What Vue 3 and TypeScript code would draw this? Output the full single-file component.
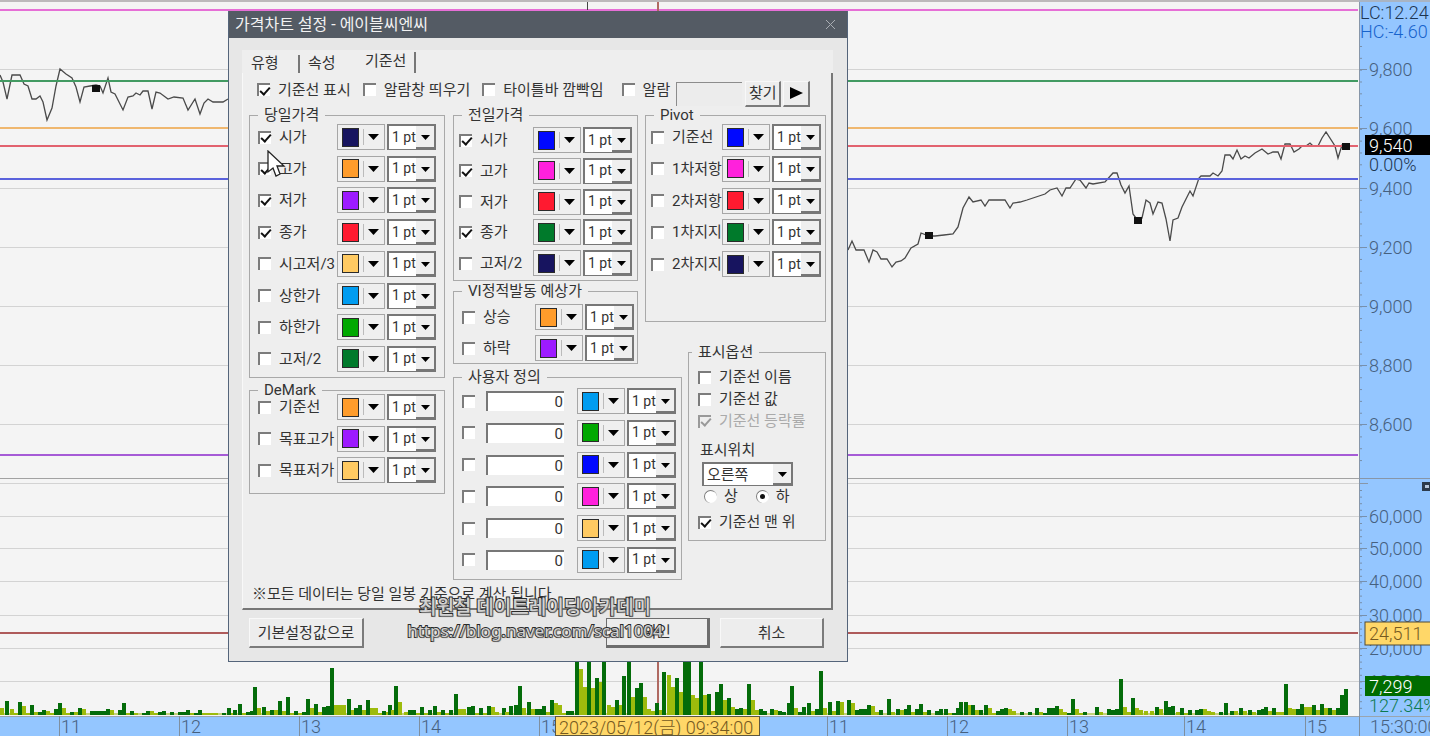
<script setup lang="ts">
import { reactive, ref } from 'vue'

interface Row { label: string; color: string; on?: boolean; value?: string; width: string }
interface Group { key: string; title: string; rows: Row[] }
interface Area { name: string; groups: Group[] }

const navy = '#17145f'
const orange = '#ff9c2b'
const purple = '#9d1bff'
const red = '#ff1a30'
const sand = '#ffca62'
const sky = '#009cf0'
const lime = '#00a800'
const green = '#007a2b'
const blue = '#0008ff'
const pink = '#ff21dc'

const row = (label: string, color: string, on = false, value?: string): Row =>
  ({ label, color, on, value, width: '1 pt' })

const areas = reactive<Area[]>([
  {
    name: 'left',
    groups: [
      {
        key: 'today', title: '당일가격', rows: [
          row('시가', navy, true), row('고가', orange, true), row('저가', purple, true), row('종가', red, true),
          row('시고저/3', sand), row('상한가', sky), row('하한가', lime), row('고저/2', green),
        ],
      },
      { key: 'demark', title: 'DeMark', rows: [row('기준선', orange), row('목표고가', purple), row('목표저가', sand)] },
    ],
  },
  {
    name: 'middle',
    groups: [
      {
        key: 'prev', title: '전일가격', rows: [
          row('시가', blue, true), row('고가', pink, true), row('저가', red), row('종가', green, true), row('고저/2', navy),
        ],
      },
      { key: 'vi', title: 'VI정적발동 예상가', rows: [row('상승', orange), row('하락', purple)] },
    ],
  },
  {
    name: 'right',
    groups: [
      {
        key: 'pivot', title: 'Pivot', rows: [
          row('기준선', blue), row('1차저항', pink), row('2차저항', red), row('1차지지', green), row('2차지지', navy),
        ],
      },
    ],
  },
  {
    name: 'custom',
    groups: [
      {
        key: 'user', title: '사용자 정의', rows: [sky, lime, blue, pink, sand, sky].map(c => row('', c, false, '0')),
      },
    ],
  },
])

const tools = reactive([
  { label: '기준선 표시', on: true },
  { label: '알람창 띄우기', on: false },
  { label: '타이틀바 깜빡임', on: false },
  { label: '알람', on: false },
])
const display = reactive([
  { label: '기준선 이름', on: false, disabled: false },
  { label: '기준선 값', on: false, disabled: false },
  { label: '기준선 등락률', on: true, disabled: true },
])
const onTop = ref(true)
const side = ref('오른쪽')
const vertical = ref('하')
const widths = ['1 pt', '2 pt', '3 pt', '4 pt', '5 pt']

const grid = [69, 188, 247, 306, 365, 424, 483, 516, 548, 581, 615, 648, 681]
const levels = [
  { y: 9, c: '#e66fd6' }, { y: 80, c: '#429a62' }, { y: 127, c: '#efb76f' },
  { y: 145, c: '#e2626f' }, { y: 178, c: '#5a62dc' }, { y: 454, c: '#a65bd6' }, { y: 632, c: '#ae5a5a' },
]
const priceLeft = '0,75 3,82 7,99 12,75 20,75 24,84 28,86 32,99 36,99 40,96 43,102 47,120 52,108 56,86 60,69 66,74 72,78 76,87 80,102 84,87 90,86 96,85 100,86 103,93 108,78 111,92 115,94 123,110 128,97 133,96 136,93 140,95 143,91 148,91 152,109 156,92 160,93 168,99 174,97 183,98 188,110 195,99 200,114 204,103 208,99 213,102 223,102 228,99'
const priceRight = '848,250 852,241 856,250 864,250 869,262 873,250 877,252 881,259 887,259 892,267 896,262 901,261 905,258 911,248 918,244 921,233 929,236 935,236 944,235 953,234 958,227 963,208 969,197 973,202 981,200 985,206 989,200 1005,200 1010,208 1013,203 1020,202 1027,200 1045,194 1050,190 1057,188 1062,196 1066,188 1070,188 1076,179 1080,180 1086,188 1089,183 1093,184 1105,182 1113,173 1117,173 1121,185 1125,193 1129,186 1133,214 1138,221 1142,218 1146,200 1150,203 1153,214 1158,202 1162,203 1166,219 1170,241 1173,220 1178,218 1182,207 1190,191 1193,196 1199,178 1201,176 1210,176 1213,173 1218,176 1222,171 1225,155 1230,155 1233,159 1237,150 1241,159 1245,156 1249,158 1255,153 1262,149 1268,154 1273,152 1278,152 1281,159 1285,144 1290,144 1294,152 1299,149 1302,146 1306,146 1310,143 1313,146 1318,146 1322,138 1326,132 1335,146 1338,158 1342,145 1346,146'
const markers = [[96, 88], [929, 235], [1138, 220], [1346, 146]]

const volume = (
  'l0,7 d5,14 l10,6 l14,2 d18,13 l22,9 l26,2 d30,10 l34,3 d38,3 d42,5 l46,4 l50,2 d54,6 d58,12 l62,7 l66,2 d70,3 l74,3 d78,7 l82,6 d90,4 d94,4 d98,4 d102,4 d106,6 l110,5 d118,5 d122,12 l126,2 d130,4 l134,2 d142,2 d146,4 l150,4 l154,2 d158,3 d162,4 d170,3 d178,3 d182,3 d186,5 l190,2 d194,2 d198,5 l202,2 l206,2 l210,2 l214,2 d222,2 d227,7 l231,2 ' +
  'd233,5 d238,11 l242,2 d246,3 d250,4 d253,28 l257,7 d262,8 l266,4 d270,5 l274,5 d278,14 l282,4 d286,18 l290,2 d294,4 l298,2 d302,3 d306,16 l310,7 d314,11 l318,3 d322,8 d326,9 d330,47 l334,10 l338,10 l342,10 d347,16 l351,5 d354,7 d358,10 l362,5 d366,15 l370,7 l374,7 l378,2 d382,4 l386,3 d388,10 l391,5 d394,29 l398,13 l404,3 d408,5 d412,5 l416,2 d420,8 l424,2 d428,5 d433,9 l437,3 d441,5 l445,2 d449,5 d454,21 l458,6 l462,6 d467,8 d471,9 l475,2 d479,7 l483,2 d487,9 l491,8 l495,3 d502,7 l505,3 d509,9 d514,10 d518,29 l522,7 d527,13 l531,6 d535,6 d539,6 ' +
  'd542,9 l546,3 d550,15 l554,12 l558,10 l562,2 d566,4 d570,4 d575,54 l579,46 l583,28 d587,54 l591,27 d595,37 l599,33 d602,54 l607,10 l611,8 d615,15 l619,10 d622,39 d627,54 l631,18 d635,27 d639,32 l643,18 l647,6 l651,4 d655,12 l659,5 d662,43 l667,40 l671,28 d675,37 l679,23 d683,54 d687,54 l691,20 l695,17 d699,54 l703,20 d707,21 l711,4 d715,23 d719,31 l723,15 d727,17 l731,8 d735,6 d739,7 l743,6 d747,31 l751,15 l755,5 d759,6 d763,4 d770,6 l774,5 d778,4 d782,3 d787,12 d790,29 l794,7 d798,3 d802,8 d807,12 l811,4 d815,6 d819,44 l823,7 d828,13 l832,4 d836,14 l840,13 ' +
  'd847,15 l851,12 d855,5 d859,6 d863,6 d867,10 l871,9 l875,3 d879,5 d887,16 l891,3 d896,6 l900,5 d904,6 d907,10 l911,3 d915,6 d919,11 l923,3 d927,5 d935,4 d939,6 d944,6 l948,2 d952,2 d956,7 d959,13 d964,13 l968,10 d971,10 l975,5 d979,5 d984,10 l988,7 l992,2 d996,4 d1000,6 d1004,7 l1008,6 l1012,4 d1020,3 d1028,3 d1035,7 l1039,3 d1043,2 d1047,7 d1051,7 d1055,9 l1059,6 l1063,3 d1067,2 d1071,16 l1075,6 l1079,2 d1083,3 d1095,8 l1099,3 d1107,6 d1111,5 d1115,6 d1119,36 l1123,8 l1127,3 d1131,17 l1135,7 l1139,5 l1144,4 l1150,4 d1155,8 l1159,6 d1164,14 d1168,8 d1171,9 l1176,3 d1180,7 l1184,2 d1188,5 d1195,5 d1199,6 l1203,6 l1207,4 l1211,3 d1219,3 d1224,12 d1230,4 l1234,4 ' +
  'd1239,7 l1243,4 d1248,5 l1252,3 d1257,5 d1261,6 d1264,8 l1268,4 d1272,7 l1276,3 l1280,3 d1284,31 l1288,7 l1292,6 d1296,6 d1300,11 l1304,8 l1308,8 d1312,10 l1316,5 d1320,11 l1324,7 d1328,7 l1332,5 d1336,7 d1340,20 d1344,26'
).split(' ').map(s => {
  const [x, h] = s.slice(1).split(',').map(Number)
  return { x, h, c: s[0] === 'd' ? '#046c0a' : '#9dbb0c' }
})

const prices = [
  { y: 69, t: '9,800' }, { y: 128, t: '9,600' }, { y: 188, t: '9,400' }, { y: 247, t: '9,200' },
  { y: 306, t: '9,000' }, { y: 365, t: '8,800' }, { y: 424, t: '8,600' },
]
const volumes = [
  { y: 516, t: '60,000' }, { y: 548, t: '50,000' }, { y: 581, t: '40,000' },
  { y: 615, t: '30,000' }, { y: 648, t: '20,000' }, { y: 681, t: '10,000' },
]
const minor = [
  ...Array.from({ length: 36 }, (_, i) => 46 + i * 11.83).filter(y => y < 472),
  ...Array.from({ length: 36 }, (_, i) => 490 + i * 6.6).filter(y => y < 714),
]
const hours = [
  { x: 59, t: '11' }, { x: 179, t: '12' }, { x: 299, t: '13' }, { x: 419, t: '14' }, { x: 539, t: '15' },
  { x: 827, t: '11' }, { x: 947, t: '12' }, { x: 1067, t: '13' }, { x: 1184, t: '14' }, { x: 1305, t: '15' },
]
</script>

<template>
  <main class="screen">
    <div class="chart">
      <svg class="plot" viewBox="0 0 1359 716" preserveAspectRatio="none" role="img" aria-label="가격차트">
        <rect x="0" y="0" width="1359" height="2" fill="#bcb9bb" />
        <rect v-for="y in grid" :key="y" x="0" :y="y" width="1359" height="1" fill="#d3d3d3" />
        <rect x="0" y="478" width="1359" height="1" fill="#a2a2a2" />
        <polyline :points="priceLeft" class="price" />
        <polyline :points="priceRight" class="price" />
        <rect v-for="l in levels" :key="l.y" x="0" :y="l.y" width="1358" height="2" :fill="l.c" />
        <rect v-for="m in markers" :key="m[0]" :x="m[0] - 4" :y="m[1] - 3" width="8" height="7" fill="#111" />
        <rect x="587" y="2" width="1" height="8" fill="#444" />
        <rect x="657" y="2" width="2" height="713" fill="#b06a62" />
        <rect x="0" y="713" width="1348" height="2" fill="#c4d27a" />
        <rect v-for="v in volume" :key="v.x" :x="v.x" :y="715 - v.h" width="4" :height="v.h" :fill="v.c" />
      </svg>
      <svg class="scale" viewBox="0 0 71 716" preserveAspectRatio="none" role="img" aria-label="가격 축">
        <rect width="71" height="716" fill="#94c6ff" />
        <rect width="1" height="716" fill="#8796a8" />
        <rect width="71" height="2" fill="#a8b4c4" />
        <rect v-for="y in minor" :key="y" x="1" :y="y" width="2" height="1" fill="#7890ac" />
        <rect y="478" width="71" height="1" fill="#8796a8" />
        <rect y="483" width="9" height="1" fill="#8796a8" />
        <g v-for="p in [...prices, ...volumes]" :key="p.t">
          <rect x="1" :y="p.y" width="7" height="1" fill="#7890ac" />
          <text x="10" :y="p.y + 7" class="num">{{ p.t }}</text>
        </g>
        <text x="1" y="19" class="num dark">LC:12.24</text>
        <text x="1" y="38" class="num blue">HC:-4.60</text>
        <rect x="6" y="135" width="65" height="20" fill="#000" />
        <text x="10" y="152" class="num white">9,540</text>
        <text x="10" y="171" class="num dark">0.00%</text>
        <rect x="63" y="482" width="9" height="9" fill="#2d3b4c" />
        <rect x="66" y="485" width="4" height="3" fill="#b8c8dc" />
        <rect x="6" y="622" width="68" height="23" fill="#ffd768" stroke="#4f4a38" />
        <text x="10" y="640" class="num brown">24,511</text>
        <rect x="6" y="676" width="65" height="20" fill="#006c00" />
        <text x="10" y="693" class="num white">7,299</text>
        <text x="10" y="712" class="num green">127.34%</text>
      </svg>
    </div>
    <svg class="timeline" viewBox="0 0 1430 20" preserveAspectRatio="none" role="img" aria-label="시간 축">
      <rect width="1430" height="20" fill="#94c6ff" />
      <rect width="1430" height="1" fill="#9aa4ae" />
      <g v-for="h in hours" :key="h.x">
        <rect :x="h.x" y="0" width="1" height="20" fill="#7f8f9f" />
        <text :x="h.x + 2" y="17" class="num">{{ h.t }}</text>
      </g>
      <rect x="1359" width="1" height="20" fill="#7f8f9f" />
      <text x="1370" y="17" class="num">15:30:00</text>
      <rect x="555.5" y="0.5" width="204" height="19" fill="#ffd768" stroke="#5c563f" />
      <text x="559" y="18" class="num brown">2023/05/12(금) 09:34:00</text>
    </svg>

    <section class="dialog" role="dialog" aria-label="가격차트 설정">
      <header class="titlebar">
        <h1>가격차트 설정 - 에이블씨엔씨</h1>
        <button class="close" type="button" aria-label="닫기">
          <svg width="11" height="11" viewBox="0 0 11 11"><path d="M1 1L10 10M10 1L1 10" stroke="#a9adb3" fill="none" /></svg>
        </button>
      </header>

      <div class="body">
        <nav class="tabs">
          <button type="button" class="tab first">유형</button>
          <button type="button" class="tab second">속성</button>
          <button type="button" class="tab active">기준선</button>
        </nav>

        <div class="panel">
          <div class="tools">
            <label v-for="t in tools" :key="t.label" class="check">
              <input v-model="t.on" type="checkbox"><span>{{ t.label }}</span>
            </label>
            <input class="alarm" type="text" aria-label="알람 파일" disabled>
            <button type="button" class="btn small">찾기</button>
            <button type="button" class="btn play" aria-label="재생">
              <svg width="13" height="14" viewBox="0 0 13 14"><path d="M0 1L13 7L0 13Z" fill="#000" /></svg>
            </button>
          </div>

          <div class="groups">
            <div v-for="area in areas" :key="area.name" class="area" :class="area.name">
              <fieldset v-for="g in area.groups" :key="g.key" class="group" :class="g.key">
                <legend>{{ g.title }}</legend>
                <div class="rows">
                  <div v-for="(r, i) in g.rows" :key="i" class="row">
                    <label class="check">
                      <input v-model="r.on" type="checkbox" :aria-label="r.label || `사용자 정의 ${i + 1}`">
                      <span v-if="r.label">{{ r.label }}</span>
                    </label>
                    <input v-if="r.value !== undefined" v-model="r.value" class="value" type="text" aria-label="값">
                    <button type="button" class="picker" aria-label="색상">
                      <span class="swatch" :style="{ background: r.color }"></span>
                      <svg width="11" height="6" viewBox="0 0 11 6"><path d="M0 0H11L5.500 6Z" fill="#000" /></svg>
                    </button>
                    <span class="select">
                      <select v-model="r.width" aria-label="굵기">
                        <option v-for="w in widths" :key="w">{{ w }}</option>
                      </select>
                      <i><svg width="9" height="5" viewBox="0 0 9 5"><path d="M0 0H9L4.500 5Z" fill="#000" /></svg></i>
                    </span>
                  </div>
                </div>
              </fieldset>
            </div>

            <fieldset class="group options">
              <legend>표시옵션</legend>
              <label v-for="d in display" :key="d.label" class="check" :class="{ off: d.disabled }">
                <input v-model="d.on" type="checkbox" :disabled="d.disabled"><span>{{ d.label }}</span>
              </label>
              <label class="caption" for="side">표시위치</label>
              <span class="select wide">
                <select id="side" v-model="side">
                  <option>왼쪽</option>
                  <option>오른쪽</option>
                </select>
                <i><svg width="9" height="5" viewBox="0 0 9 5"><path d="M0 0H9L4.500 5Z" fill="#000" /></svg></i>
              </span>
              <div class="radios">
                <label v-for="v in ['상', '하']" :key="v" class="check">
                  <input v-model="vertical" type="radio" name="vertical" :value="v"><span>{{ v }}</span>
                </label>
              </div>
              <label class="check"><input v-model="onTop" type="checkbox"><span>기준선 맨 위</span></label>
            </fieldset>
          </div>

          <p class="note">※모든 데이터는 당일 일봉 기준으로 계산 됩니다</p>
        </div>

        <footer class="actions">
          <button type="button" class="btn reset">기본설정값으로</button>
          <button type="button" class="btn ok">확인</button>
          <button type="button" class="btn cancel">취소</button>
        </footer>
      </div>

      <p class="watermark">
        <span>최원철 데이트레이딩아카데미</span>
        <span class="url">https://blog.naver.com/scal1004</span>
      </p>
      <svg class="cursor" width="20" height="28" viewBox="0 0 20 28">
        <path d="M1 1V22L6 18L9 26L13 24L10 16H17Z" fill="#fff" stroke="#222" stroke-width="1.300" />
      </svg>
    </section>
  </main>
</template>

<style>
html, body, #app { height: 100%; }
body { margin: 0; overflow: hidden; }
</style>

<style scoped>
.screen {
  position: relative;
  display: flex;
  flex-direction: column;
  min-height: 100vh;
  background: #f4f4f4;
  font-family: Roboto, "Noto Sans CJK KR", sans-serif;
  font-size: 15px;
  color: #333;
}
.screen * { box-sizing: border-box; }
button, input, select { font: inherit; color: inherit; margin: 0; }
.chart { flex: 1; display: flex; min-height: 0; }
.plot { flex: 1; min-width: 0; height: calc(100vh - 20px); display: block; }
.scale { width: 71px; height: calc(100vh - 20px); display: block; }
.timeline { width: 100%; height: 20px; display: block; }
.price { fill: none; stroke: #4a4a4a; stroke-width: 1.3; }
.num { font-size: 18px; font-weight: 300; fill: #46607e; }
.num.dark { fill: #1d3550; }
.num.blue { fill: #1763cc; }
.num.white { fill: #fff; }
.num.brown { fill: #75591f; }
.num.green { fill: #0c7a50; }

.dialog {
  position: absolute;
  left: 228px;
  top: 11px;
  width: 620px;
  border: 1px solid #54647a;
  border-top: 0;
  background: #e7e7e7;
}
.titlebar {
  display: flex;
  align-items: center;
  justify-content: space-between;
  height: 27px;
  padding: 0 11px 0 6px;
  background: #545b64;
}
.titlebar h1 { margin: 0; font-size: 16px; line-height: 22px; font-weight: 400; color: #f2f2f2; }
.close { border: 0; padding: 2px 0; background: none; display: flex; }
.body { padding: 12px 14px 13px 13px; }
.tabs { display: flex; align-items: flex-end; height: 23px; background: #eee; }
.tab { height: 18px; border: 0; background: none; padding: 0 0 2px 9px; width: 58px; text-align: left; line-height: 16px; }
.tab.first { border-right: 2px solid #777; }
.tab.second { padding-left: 8px; width: 56px; }
.tab.active { height: 21px; padding-bottom: 4px; width: 60px; border-right: 2px solid #777; }
.panel {
  padding: 0 5px 0 6px;
  min-height: 537px;
  background: #eee;
  border: solid #777;
  border-width: 0 2px 2px 0;
  border-left: 1px solid #f8f8f8;
}
.tools { display: flex; align-items: center; height: 33px; padding-left: 8px; }
.tools .check { gap: 8px; margin-right: 12px; }
.tools .check:nth-of-type(3) { margin-right: 18px; }
.tools .check:nth-of-type(4) { margin-right: 6px; }
.check { display: flex; align-items: center; gap: 8px; white-space: nowrap; line-height: 20px; }
.check input { appearance: none; flex: none; width: 13px; height: 13px; background: #fff; border: solid #7c7c7c; border-width: 2px 0 0 2px; }
.check input:checked { display: grid; place-items: center; }
.check input[type="checkbox"]:checked::after {
  content: "";
  width: 8px;
  height: 4px;
  border: solid #111;
  border-width: 0 0 2px 2px;
  transform: translateY(-1px) rotate(-48deg);
}
.check.off { color: #aaa; }
.check.off input { background: #eee; border-color: #999; }
.check.off input[type="checkbox"]:checked::after { border-color: #999; }
.check input[type="radio"] { border-radius: 50%; border-width: 1px 0 0 1px; }
.check input[type="radio"]:checked::after { content: ""; width: 5px; height: 5px; border-radius: 50%; background: #111; }
.alarm { width: 66px; height: 24px; margin: 8px 3px 0 0; background: #ececec; border: solid #8c8c8c; border-width: 1px 0 0 1px; }
.btn {
  background: #ededed;
  border: solid #7b7b7b;
  border-width: 1px 2px 2px 1px;
  border-top-color: #f8f8f8;
  border-left-color: #f8f8f8;
  padding: 0;
  line-height: 20px;
}
.btn.small { width: 36px; height: 26px; margin: 8px 2px 0 0; }
.btn.play { width: 27px; height: 26px; margin-top: 8px; display: grid; place-items: center; }

.groups {
  display: grid;
  grid-template-columns: 196px 8px 185px 7px 37px 6px 1fr;
  grid-template-rows: 237px 25px 212px;
}
.left { grid-area: 1 / 1 / 4 / 2; }
.middle { grid-area: 1 / 3 / 3 / 4; }
.right { grid-area: 1 / 5 / 2 / 8; }
.custom { grid-area: 3 / 3 / 4 / 6; }
.options { grid-area: 2 / 7 / 4 / 8; align-self: start; }
.area { display: flex; flex-direction: column; }
.left { gap: 3px; }
.middle { gap: 1px; }
.group { display: flex; flex-direction: column; min-width: 0; margin: 0; border: 1px solid #a9a9a9; }
.group legend { margin-left: 0; padding: 0 6px; height: 18px; line-height: 18px; }
.today { min-height: 272px; padding: 0 8px 5px 8px; }
.demark { min-height: 113px; padding: 0 8px 10px 8px; }
.prev { min-height: 175px; padding: 3px 5px 4px 5px; }
.vi { min-height: 82px; padding: 4px 3px 2px 8px; }
.pivot { min-height: 216px; padding: 0 4px 44px 5px; }
.user { min-height: 212px; padding: 2px 5px 6px 8px; }
.prev legend, .pivot legend { margin-left: 3px; }
.rows { display: flex; flex-direction: column; justify-content: space-between; }
.today .rows { min-height: 248px; }
.demark .rows { min-height: 89px; margin-top: -5px; }
.prev .rows { min-height: 149px; }
.vi .rows { min-height: 57px; }
.pivot .rows { min-height: 153px; }
.user .rows { min-height: 185px; }
.row { display: flex; align-items: center; height: 26px; }
.row .check { flex: 1; min-width: 0; }
.value {
  width: 78px;
  height: 20px;
  margin-right: 13px;
  padding: 0 1px;
  text-align: right;
  background: #fff;
  border: solid #777;
  border-width: 2px 0 0 2px;
}
.picker {
  display: flex;
  align-items: center;
  flex: none;
  width: 48px;
  height: 26px;
  margin-right: 2px;
  padding: 0 0 0 4px;
  background: #efefef;
  border: 1px solid #a6a6a6;
}
.swatch { width: 17px; height: 19px; border: 1px solid #2a2a2a; margin-right: 4px; }
.picker svg { box-sizing: content-box; padding: 5px 0 5px 4px; border-left: 1px solid #bbb; }
.select {
  display: grid;
  flex: none;
  width: 49px;
  height: 26px;
  background: #fff;
  border: solid #777;
  border-width: 2px 1px 1px 2px;
}
.select select {
  grid-area: 1 / 1;
  appearance: none;
  width: 100%;
  height: 100%;
  border: 0;
  padding: 0 0 2px 3px;
  background: none;
  font-size: 14px;
}
.select i {
  grid-area: 1 / 1;
  justify-self: end;
  display: grid;
  place-items: center;
  width: 19px;
  padding-top: 2px;
  pointer-events: none;
  background: #efefef;
  border: solid #777;
  border-width: 0 1px 2px 0;
}
.options { padding: 5px 8px 0 9px; min-height: 198px; }
.options legend { margin-left: -6px; }
.options .check { height: 22px; }
.caption { padding: 8px 0 0 2px; line-height: 20px; }
.select.wide { width: 91px; height: 24px; margin: 2px 0 0 4px; }
.select.wide select { font-size: 15px; padding-bottom: 0; }
.radios { display: flex; gap: 18px; padding: 0 0 5px 6px; }
.radios .check { height: 20px; gap: 7px; }
.note { margin: 0; padding: 3px 0 0 3px; line-height: 22px; }
.actions { display: flex; padding: 8px 9px 0 7px; gap: 10px; }
.actions .btn { width: 104px; height: 30px; }
.actions .reset { width: 115px; margin-right: auto; }
.actions .ok { border-color: #6d6d6d; border-width: 1px 3px 3px 1px; }
.watermark {
  position: absolute;
  left: 178px;
  top: 584px;
  display: flex;
  flex-direction: column;
  align-items: center;
  width: 256px;
  margin: 0;
  font: 500 19px/24px "Noto Sans", "Noto Sans CJK KR", sans-serif;
  color: #d2d2d2;
  -webkit-text-stroke: 2px #2a2a2a;
  paint-order: stroke fill;
  text-shadow: 1px 1px 1px #777;
  white-space: nowrap;
  pointer-events: none;
}
.watermark .url { font-size: 17px; font-weight: 400; }
.cursor { position: absolute; left: 38px; top: 139px; pointer-events: none; }
</style>
